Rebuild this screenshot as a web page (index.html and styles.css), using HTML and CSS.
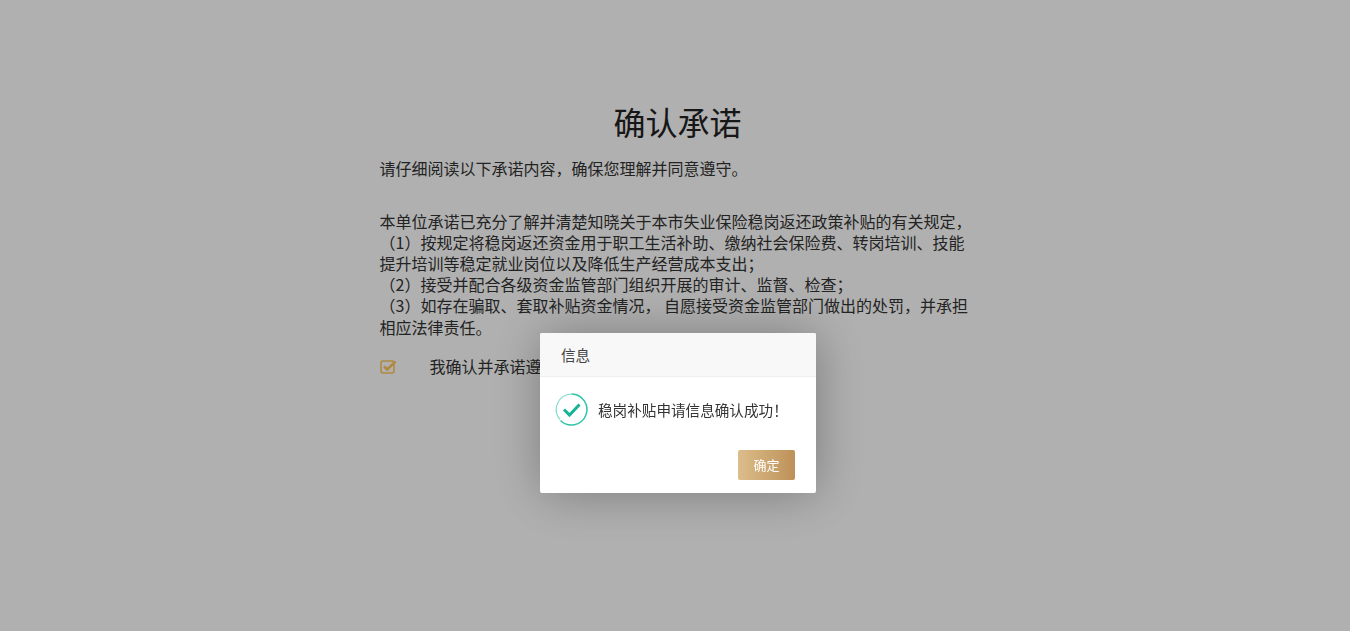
FILE: index.html
```html
<!DOCTYPE html>
<html lang="zh-CN">
<head>
  <meta charset="UTF-8" />
  <title>确认承诺</title>
  <link rel="stylesheet" href="styles.css">
</head>
<body>
  <div class="page">
    <h1>确认承诺</h1>
    <p class="intro">请仔细阅读以下承诺内容，确保您理解并同意遵守。</p>
    <p class="terms">
      本单位承诺已充分了解并清楚知晓关于本市失业保险稳岗返还政策补贴的有关规定，<br />
      （1）按规定将稳岗返还资金用于职工生活补助、缴纳社会保险费、转岗培训、技能提升培训等稳定就业岗位以及降低生产经营成本支出；<br />
      （2）接受并配合各级资金监管部门组织开展的审计、监督、检查；<br />
      （3）如存在骗取、套取补贴资金情况， 自愿接受资金监管部门做出的处罚，并承担相应法律责任。
    </p>
    <div class="confirm">
      <svg class="check-box" width="17" height="15" viewBox="0 0 17 15">
        <rect x="1" y="2" width="13" height="12" rx="2" fill="none" stroke="#ffc75e" stroke-width="1.6" />
        <path d="M4 7.5l3.2 3L15.5 2.5" fill="none" stroke="#ffc75e" stroke-width="2.6" />
      </svg>
      <span>我确认并承诺遵守</span>
    </div>
  </div>

  <div class="shade"></div>

  <div class="dialog">
    <div class="dialog-title">信息</div>
    <div class="dialog-body">
      <svg class="ok-icon" width="33" height="33" viewBox="0 0 33 33">
        <path d="M16.5 1A15.5 15.5 0 1 1 5.5 27.5" fill="none" stroke="#2ec4a6" stroke-width="1.5" />
        <path d="M5 26.5A15.5 15.5 0 0 1 16.5 1" fill="none" stroke="#7fdcc8" stroke-width="1.2" />
        <path d="M9 16.5l5.5 5.5L24.5 11.5" fill="none" stroke="#17b394" stroke-width="3" />
      </svg>
      <span>稳岗补贴申请信息确认成功！</span>
    </div>
    <div class="dialog-actions">
      <a class="ok-btn">确定</a>
    </div>
  </div>
</body>
</html>
```

FILE: styles.css
```css
html, body { height: 100%; }
body { margin: 0; background: #fff; color: #333; font-family: "Noto Sans CJK SC", "Liberation Sans", sans-serif; overflow: hidden; }
.page { width: 596px; margin-left: 379.5px; padding-top: 98px; font-size: 16px; line-height: 21.1px; }
h1 { margin: 0 0 14px; font-size: 32px; font-weight: 400; line-height: 46px; text-align: center; color: #222; }
.intro { margin: 0 0 32px; }
.terms { margin: 0 0 18px; }
.confirm { display: flex; align-items: center; gap: 33px; }
.check-box { flex: none; }
.shade { position: fixed; inset: 0; background: rgba(0, 0, 0, .31); }
.dialog { position: fixed; left: 540px; top: 333px; width: 276px; height: 160px; display: flex; flex-direction: column; background: #fff; border-radius: 2px; box-shadow: 1px 1px 50px rgba(0, 0, 0, .3); font-size: 14.6px; }
.dialog-title { height: 43px; line-height: 43px; padding-left: 21px; background: #f8f8f8; border-bottom: 1px solid #eee; color: #444; border-radius: 2px 2px 0 0; }
.dialog-body { display: flex; align-items: center; gap: 10px; padding: 16px 15px 0; color: #333; }
.ok-icon { flex: none; }
.dialog-actions { margin-top: auto; padding: 0 21px 13px; display: flex; justify-content: flex-end; }
.ok-btn { width: 57px; height: 30px; line-height: 30px; text-align: center; color: #fff; font-size: 13px; border-radius: 2px; background: linear-gradient(90deg, #dcbd8b, #bd9158); }
```
